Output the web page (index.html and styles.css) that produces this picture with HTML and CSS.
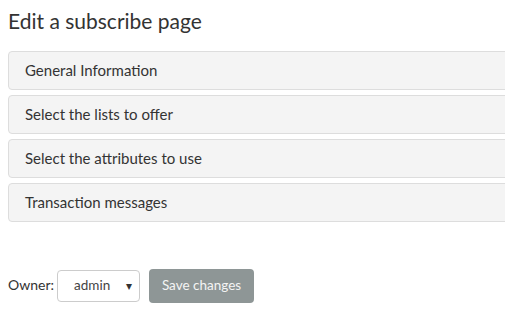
FILE: index.html
```html
<!DOCTYPE html>
<html>
<head>
<meta charset="utf-8">
<link rel="stylesheet" href="styles.css">
</head>
<body>
<div class="page">
  <h1 class="title">Edit a subscribe page</h1>
  <div class="panels">
    <div class="panel">General Information</div>
    <div class="panel">Select the lists to offer</div>
    <div class="panel">Select the attributes to use</div>
    <div class="panel">Transaction messages</div>
  </div>
  <div class="footer">
    <label class="owner-label">Owner:</label>
    <div class="select"><span>admin</span><span class="caret">▾</span></div>
    <button class="btn">Save changes</button>
  </div>
</div>
</body>
</html>
```
FILE: styles.css
```css
html, body {
  margin: 0;
  padding: 0;
  overflow: hidden;
  background: #fff;
}
body {
  font-family: Lato, "Open Sans", sans-serif;
  color: #333;
}
.page {
  padding: 0 0 0 8px;
  width: 540px;
}
.title {
  margin: 0;
  padding-top: 8px;
  font-size: 21px;
  font-weight: 400;
  line-height: 26px;
  color: #333;
}
.panels {
  margin-top: 17px;
  display: flex;
  flex-direction: column;
  gap: 5px;
}
.panel {
  box-sizing: border-box;
  height: 39px;
  border: 1px solid #ddd;
  border-radius: 4px;
  background: #f4f4f4;
  padding: 0 16px 2px;
  display: flex;
  align-items: center;
  font-size: 15px;
}
.footer {
  margin-top: 47px;
  display: flex;
  align-items: center;
  font-size: 14px;
}
.owner-label {
  margin-right: 3px;
  padding-bottom: 3px;
}
.select {
  border: 1px solid #ccc;
  border-radius: 4px;
  display: flex;
  align-items: center;
  justify-content: space-between;
  padding: 0 7px 2px 16px;
  box-sizing: border-box;
  width: 83px;
  height: 32px;
  font-size: 13.5px;
  color: #444;
}
.caret {
  font-size: 12px;
  color: #333;
}
.btn {
  margin-left: 9px;
  width: 105px;
  height: 34px;
  border: none;
  border-radius: 4px;
  background: #8e9696;
  color: #f4f4f4;
  font-family: inherit;
  font-size: 13.5px;
  padding: 0 0 2px;
}
```
